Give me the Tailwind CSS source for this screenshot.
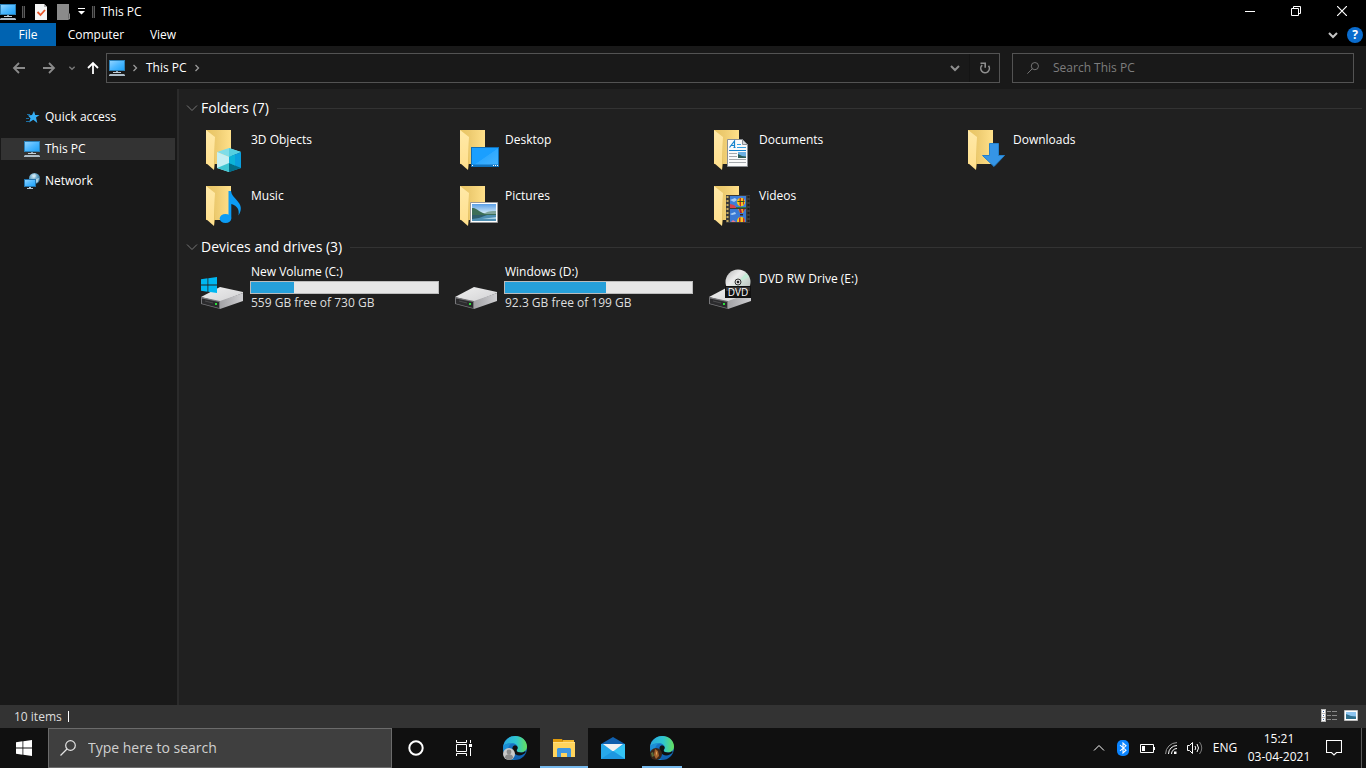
<!DOCTYPE html>
<html lang="en">
<head>
    <meta charset="UTF-8">
    <meta name="viewport" content="width=device-width, initial-scale=1.0">
    <title>This PC</title>
    <script src="https://cdn.jsdelivr.net/npm/@tailwindcss/browser@4"></script>
</head>
<body class="h-screen flex flex-col overflow-hidden bg-[#202020] text-white text-xs font-['Open_Sans','Noto_Sans',sans-serif]">

    <!-- Shared icons -->
    <svg class="absolute w-0 h-0" aria-hidden="true">
      <defs>
        <linearGradient id="g-screen" x1="0" y1="0" x2="1" y2="1">
          <stop offset="0" stop-color="#8fd3ff"/><stop offset=".5" stop-color="#4db8ff"/><stop offset="1" stop-color="#1fa2f7"/>
        </linearGradient>
        <linearGradient id="g-back" x1="0" y1="0" x2="1" y2="0">
          <stop offset="0" stop-color="#e8c462"/><stop offset=".4" stop-color="#edcb70"/><stop offset="1" stop-color="#ffe08a"/>
        </linearGradient>
        <linearGradient id="g-flap" x1="0" y1="0" x2="0" y2="1">
          <stop offset="0" stop-color="#ffe9a8"/><stop offset="1" stop-color="#ffdf8c"/>
        </linearGradient>
        <linearGradient id="g-desk" x1="0" y1="0" x2="1" y2="1">
          <stop offset="0" stop-color="#1a9fff"/><stop offset=".5" stop-color="#1a9fff"/><stop offset=".52" stop-color="#2fa9ff"/><stop offset="1" stop-color="#45b4ff"/>
        </linearGradient>
        <linearGradient id="g-sky" x1="0" y1="0" x2="0" y2="1">
          <stop offset="0" stop-color="#5b9fe6"/><stop offset=".55" stop-color="#d5ecf8"/><stop offset="1" stop-color="#8cc0dd"/>
        </linearGradient>
        <linearGradient id="g-top" x1="0" y1="0" x2="1" y2="1">
          <stop offset="0" stop-color="#efefef"/><stop offset="1" stop-color="#d2d2d4"/>
        </linearGradient>
        <linearGradient id="g-side" x1="0" y1="0" x2="1" y2="0">
          <stop offset="0" stop-color="#a2a2a5"/><stop offset="1" stop-color="#cfcfd2"/>
        </linearGradient>
        <linearGradient id="g-disc" x1="0" y1="0" x2="1" y2="1">
          <stop offset="0" stop-color="#b5b5b5"/><stop offset=".35" stop-color="#ececec"/><stop offset=".6" stop-color="#cfdcd4"/><stop offset="1" stop-color="#b0b0b0"/>
        </linearGradient>
        <linearGradient id="g-edge" x1="0" y1="0" x2="1" y2="0">
          <stop offset="0" stop-color="#2aa9e0"/><stop offset=".55" stop-color="#2fc6cf"/><stop offset="1" stop-color="#66e05a"/>
        </linearGradient>
        <linearGradient id="g-edge2" x1="0" y1="0" x2="0" y2="1">
          <stop offset="0" stop-color="#1b7fd0"/><stop offset="1" stop-color="#0f5fb0"/>
        </linearGradient>
        <radialGradient id="g-globe" cx=".4" cy=".3" r=".8">
          <stop offset="0" stop-color="#cfe9f5"/><stop offset=".5" stop-color="#5a9cc0"/><stop offset="1" stop-color="#245a80"/>
        </radialGradient>
      </defs>

      <symbol id="i-pc" viewBox="0 0 16 16">
        <path d="M0 0h16v11H0z" fill="#2c81b8"/>
        <path d="M1 1h14v9H1z" fill="url(#g-screen)"/>
        <path d="M7 11h2v1H7z" fill="#8fa4b2"/><path d="M4 12h8v1H4z" fill="#c3ced6"/>
        <path d="M1 14h14l1 1v1H0v-1z" fill="#aebdc8"/>
      </symbol>

      <symbol id="i-folder" viewBox="0 0 48 48">
        <path d="M8 4h25v34H8z" fill="url(#g-back)"/>
        <path d="M8 4l9 7-1 33-8-7z" fill="url(#g-flap)"/>
        <path d="M17 11v26l-1 7z" fill="#e2bf62"/>
      </symbol>

      <symbol id="i-drive" viewBox="0 0 48 48">
        <path d="M3 32l19-10 23 5v1L22 37z" fill="url(#g-top)"/>
        <path d="M22 36l23-8v8l-23 8z" fill="url(#g-side)"/>
        <path d="M3 32l19 4v8L3 39z" fill="#77777a"/>
        <path d="M4 33.400l17 3.500v6L4 38.400z" fill="#2b2b2d"/>
        <path d="M7 36l8 2" stroke="#4a4a4c" fill="none"/>
        <path d="M17 38h2v2h-2z" fill="#2be03b"/>
      </symbol>

      <symbol id="i-win" viewBox="0 0 16 16">
        <path d="M0 2.200L6.500 1.300V7.600H0zM7.300 1.200L16 0V7.600H7.300zM0 8.400H6.500V14.700L0 13.800zM7.300 8.400H16V16L7.300 14.800z" fill="currentColor"/>
      </symbol>

      <symbol id="i-edge" viewBox="0 0 24 24">
        <circle cx="12" cy="12" r="12" fill="url(#g-edge2)"/>
        <path d="M.2 10.200C1.200 4.300 6.200 0 12.200 0 19 0 24 4.800 24 10.500c0 3.600-2.700 5.900-6 5.900-2.800 0-4.300-1-4.300-2 0-.7 1-1.200 1-2.900 0-2.400-2.300-4.300-5.700-4.300-3.400 0-7.200 1.300-8.800 3z" fill="url(#g-edge)"/>
        <path d="M9.500 11.800c.3-1.600 1.600-2.600 3-2.400 1.300.2 2.200 1.200 2.200 2.400 0 1.200-1 1.900-1 2.700 0 1 1.500 2 4.300 2 1.600 0 3-.5 4-1.300l.8.900c-1.600 2.200-4 3.400-6.700 3.400-3.900 0-7.100-3.500-6.600-7.700z" fill="#101010"/>
        <path d="M.2 10.200c1.600-1.900 5-3 8.800-3C5.800 8.800 4.600 12 5.200 15.500 5.800 19 8.500 22.500 12 24 5.400 24-.8 18.500.2 10.200z" fill="#1c8fd6"/>
      </symbol>

      <symbol id="i-chev" viewBox="0 0 12 12">
        <path d="M2 4l4 4 4-4" fill="none" stroke="currentColor" stroke-width="2"/>
      </symbol>
      <symbol id="i-thin" viewBox="0 0 12 12">
        <path d="M1 3.500l5 5 5-5" fill="none" stroke="currentColor"/>
      </symbol>
      <symbol id="i-right" viewBox="0 0 8 8">
        <path d="M2.500 1l3 3-3 3" fill="none" stroke="currentColor" stroke-width="1.300"/>
      </symbol>
      <symbol id="i-arrow" viewBox="0 0 14 14">
        <path d="M13 7H2M7 2L2 7l5 5" fill="none" stroke="currentColor" stroke-width="1.800"/>
      </symbol>
      <symbol id="i-search" viewBox="0 0 16 16">
        <circle cx="10.500" cy="5.500" r="4.800" fill="none" stroke="currentColor" stroke-width="1.200"/>
        <path d="M7 9L.5 15.500" fill="none" stroke="currentColor" stroke-width="1.200"/>
      </symbol>
    </svg>

    <!-- Title bar -->
    <header class="shrink-0 bg-black">
      <div class="flex items-center h-[23px]">
        <svg class="w-4 h-4"><use href="#i-pc"/></svg>
        <span class="w-[3px] h-3 ml-1.5 bg-[#222] border-x border-[#5a5a5a]"></span>
        <button type="button" aria-label="Properties" class="ml-2.5">
          <svg class="w-3 h-4" viewBox="0 0 12 16"><path d="M0 0h9l3 3v13H0z" fill="#f4f4f4"/><path d="M9 0v3h3z" fill="#b5b5b5"/><path d="M2.500 8l3 3L10 6" fill="none" stroke="#e8562a" stroke-width="1.800"/></svg>
        </button>
        <button type="button" aria-label="New folder" class="ml-2.5">
          <svg class="w-[13px] h-4" viewBox="0 0 13 16"><path d="M0 0h12v9l1 1v5l-2 1H0z" fill="#8a8a8a"/><path d="M11.500 9.500v5" stroke="#6a6a6a"/></svg>
        </button>
        <button type="button" aria-label="Customize Quick Access Toolbar" class="ml-2">
          <svg class="w-[7px] h-[7px]" viewBox="0 0 7 7"><path d="M0 0h7v1H0zM0 3h7L3.500 6.500z" fill="#fff"/></svg>
        </button>
        <span class="w-[3px] h-3 ml-[7px] bg-[#222] border-x border-[#5a5a5a]"></span>
        <h1 class="ml-1.5">This PC</h1>
        <div class="flex ml-auto mr-px pb-0.5">
          <button type="button" aria-label="Minimize" class="w-[46px] h-5 flex items-center justify-center"><svg class="w-2.5 h-2.5" viewBox="0 0 10 10"><path d="M0 5h10v1H0z" fill="#fff"/></svg></button>
          <button type="button" aria-label="Restore" class="w-[46px] h-5 flex items-center justify-center"><svg class="w-2.5 h-2.5" viewBox="0 0 10 10"><path d="M.5 2.500h7v7h-7zM2.500 2.500v-2h7v7h-2" fill="none" stroke="#fff"/></svg></button>
          <button type="button" aria-label="Close" class="w-[46px] h-5 flex items-center justify-center"><svg class="w-2.5 h-2.5" viewBox="0 0 10 10"><path d="M0 0l10 10M10 0L0 10" stroke="#fff" stroke-width="1.200"/></svg></button>
        </div>
      </div>
      <nav class="flex items-center h-[23px]">
        <button type="button" class="w-14 h-full bg-[#0063b1]">File</button>
        <button type="button" class="w-20 h-full">Computer</button>
        <button type="button" class="w-[54px] h-full">View</button>
        <button type="button" aria-label="Expand the ribbon" class="ml-auto"><svg class="w-3 h-3 text-[#c4c4c4]"><use href="#i-chev"/></svg></button>
        <button type="button" aria-label="Help" class="ml-2 mr-[3px] w-4 h-4 rounded-full bg-[#0a6cce] text-xs leading-4 font-bold">?</button>
      </nav>
    </header>

    <!-- Address bar -->
    <div class="flex items-center shrink-0 h-[43px] pr-3 bg-[#191919]">
      <button type="button" aria-label="Back" class="ml-3 text-[#8a8a8a]"><svg class="w-3.5 h-3.5"><use href="#i-arrow"/></svg></button>
      <button type="button" aria-label="Forward" class="ml-4 text-[#8a8a8a]"><svg class="w-3.5 h-3.5 rotate-180"><use href="#i-arrow"/></svg></button>
      <button type="button" aria-label="Recent locations" class="ml-3 text-[#7a7a7a]"><svg class="w-2 h-2"><use href="#i-chev"/></svg></button>
      <button type="button" aria-label="Up" class="ml-2.5 text-white"><svg class="w-3.5 h-3.5 rotate-90"><use href="#i-arrow"/></svg></button>
      <div class="flex items-center grow h-[30px] ml-1.5 pl-0.5 border border-[#535353]">
        <svg class="w-4 h-4"><use href="#i-pc"/></svg>
        <svg class="w-2 h-2 ml-1.5 text-[#9a9a9a]"><use href="#i-right"/></svg>
        <a href="#" class="ml-[7px]">This PC</a>
        <svg class="w-2 h-2 ml-1.5 text-[#9a9a9a]"><use href="#i-right"/></svg>
        <button type="button" aria-label="Previous locations" class="ml-auto mr-2 text-[#8f8f8f]"><svg class="w-3 h-3"><use href="#i-chev"/></svg></button>
        <button type="button" aria-label="Refresh" class="flex items-center justify-center w-[30px] h-full border-l border-[#141414] text-[#8f8f8f]">
          <svg class="w-3 h-3" viewBox="0 0 12 12"><path d="M9.500 3.800a4.300 4.300 0 1 1-6.300-.6" fill="none" stroke="currentColor" stroke-width="1.600"/><path d="M1.500 1.300h4.700v4.400" fill="none" stroke="currentColor" stroke-width="1.600"/></svg>
        </button>
      </div>
      <label class="flex items-center w-[342px] shrink-0 h-[30px] ml-3 px-3.5 border border-[#535353] text-[#7d7d7d]">
        <svg class="w-3 h-3"><use href="#i-search"/></svg>
        <input type="text" aria-label="Search This PC" placeholder="Search This PC" class="grow ml-3.5 outline-none bg-transparent placeholder:text-[#7d7d7d]">
      </label>
    </div>

    <div class="flex grow min-h-0">
      <!-- Navigation pane -->
      <aside class="flex flex-col gap-2.5 w-[179px] shrink-0 pt-[17px] pl-px pr-0.5 bg-[#191919] border-r-2 border-[#2b2b2b]">
        <a href="#" class="flex items-center gap-[5px] h-[22px] pl-[23px]">
          <svg class="w-4 h-4" viewBox="0 0 16 16"><path d="M10 2l1.200 4L15.500 6l-3.500 2.600L13.300 14 9.300 10.800 5 13.500l1.500-4.200L4 6.600l4-.6z" fill="#35aef5"/><path d="M3 5.500h3M2 9.500h3M2 12.500h3" stroke="#1b6fa5" stroke-width="1.200"/></svg>
          Quick access
        </a>
        <a href="#" class="flex items-center gap-[5px] h-[22px] pl-[23px] bg-[#333]">
          <svg class="w-4 h-4"><use href="#i-pc"/></svg>
          This PC
        </a>
        <a href="#" class="flex items-center gap-[5px] h-[22px] pl-[23px]">
          <svg class="w-4 h-4" viewBox="0 0 16 16"><circle cx="10.500" cy="5.500" r="5.500" fill="url(#g-globe)"/><path d="M8 2l3-1 1 2-2 2zM12 6l3-1-1 4-2 1z" fill="#d5edf7" opacity=".7"/><path d="M0 6h12v8H0z" fill="#2374ad"/><path d="M1 7h10v6H1z" fill="url(#g-screen)"/><path d="M5 14h2v1H5zM3 15h6v1H3z" fill="#b7c6d0"/></svg>
          Network
        </a>
      </aside>

      <!-- Content -->
      <main class="grow pt-[9px] pr-1 overflow-hidden">
        <section>
          <h2 class="flex items-center h-5 pl-[7px] text-sm">
            <svg class="w-3 h-3 text-[#777]"><use href="#i-thin"/></svg>
            <span class="ml-[3px] mr-2">Folders (7)</span>
            <span class="grow h-px bg-[#333]"></span>
          </h2>
          <div class="grid grid-cols-[repeat(auto-fill,254px)] auto-rows-[56px] mt-1.5 pl-[19px]">
            <a href="#" class="flex gap-[5px] pt-0.5">
              <svg class="w-12 h-12" viewBox="0 0 48 48"><use href="#i-folder"/>
                <path d="M31 22l12 4-12 5-12-5z" fill="#7fdde8"/><path d="M31 22l12 4-12 5z" fill="#55cfe0"/>
                <path d="M19 26l12 5v15l-12-4z" fill="#c5eff3"/><path d="M43 26l-12 5v15l12-4z" fill="#0a9fdd"/>
                <path d="M31 37l-12 5 12 4z" fill="#3fc6d2"/><path d="M31 37l12 5-12 4z" fill="#036f88"/><path d="M31 31l6-2.500v11L31 37z" fill="#0cb4d8"/>
              </svg>
              <span class="mt-1.5">3D Objects</span>
            </a>
            <a href="#" class="flex gap-[5px] pt-0.5">
              <svg class="w-12 h-12" viewBox="0 0 48 48"><use href="#i-folder"/>
                <path d="M19 21h28v20H19z" fill="#0f6fb8"/><path d="M20 22h26v18H20z" fill="url(#g-desk)"/><path d="M20 38.500h26V40H20z" fill="#1273bd"/>
                <path d="M20 39h1v1h-1zM41 39h1v1h-1zM43 39h1v1h-1zM45 39h1v1h-1z" fill="#fff"/>
              </svg>
              <span class="mt-1.5">Desktop</span>
            </a>
            <a href="#" class="flex gap-[5px] pt-0.5">
              <svg class="w-12 h-12" viewBox="0 0 48 48"><use href="#i-folder"/>
                <path d="M21.500 13.500h15l5 5v22h-20z" fill="#fafafa" stroke="#8b8f94"/><path d="M36.500 13.500v5h5z" fill="#d5d8db" stroke="#8b8f94"/>
                <path d="M23.500 21.500l5-6.500v6.500M25 19.500h3.500M27.500 21.500h2" fill="none" stroke="#1583cc" stroke-width="1.200"/>
                <path d="M31 18.500h4M31 21.500h9" stroke="#35a0e0"/><path d="M23 24.500h17" stroke="#1583cc"/>
                <path d="M23 27.500h8M23 30.500h8M23 33.500h17M23 36.500h17" stroke="#a5a9ad"/>
                <path d="M32 26h8v6h-8z" fill="#6db0e2"/><path d="M32 28l4 2 4 .5V32h-8z" fill="#2d5c56"/>
              </svg>
              <span class="mt-1.5">Documents</span>
            </a>
            <a href="#" class="flex gap-[5px] pt-0.5">
              <svg class="w-12 h-12" viewBox="0 0 48 48"><use href="#i-folder"/>
                <path d="M29.500 17.500h9v12h6L34 40.500 22.500 29.500h7z" fill="#3595e6" stroke="#2380cb"/>
              </svg>
              <span class="mt-1.5">Downloads</span>
            </a>
            <a href="#" class="flex gap-[5px] pt-0.5">
              <svg class="w-12 h-12" viewBox="0 0 48 48"><use href="#i-folder"/>
                <ellipse cx="27.500" cy="36.500" rx="5.800" ry="4.500" fill="#0c9cf4"/>
                <path d="M30.500 36V9h2.500c.5 4 3 6 6 9.500 4 4.500 5.500 8.500 1.500 15 1-6-1-9.500-7.200-11.500V36z" fill="#0c9cf4"/>
              </svg>
              <span class="mt-1.5">Music</span>
            </a>
            <a href="#" class="flex gap-[5px] pt-0.5">
              <svg class="w-12 h-12" viewBox="0 0 48 48"><use href="#i-folder"/>
                <path d="M18.500 20.500h27v20h-27z" fill="#fff" stroke="#999"/><path d="M20 22h24v17H20z" fill="url(#g-sky)"/>
                <path d="M20 26c4 0 5 2 9 4s6 2 15 2v1H20z" fill="#3d6f58"/><path d="M33 31c4-2 7-2 11-2v3H33z" fill="#7fa49a"/>
                <path d="M20 33h24v6H20z" fill="#4f8fb2"/><path d="M20 33h15l-8 3-7 1z" fill="#2f5f6c"/><path d="M30 37l14-2v2z" fill="#a5cfe2"/>
              </svg>
              <span class="mt-1.5">Pictures</span>
            </a>
            <a href="#" class="flex gap-[5px] pt-0.5">
              <svg class="w-12 h-12" viewBox="0 0 48 48"><use href="#i-folder"/>
                <path d="M20 13h24v28H20z" fill="#3a3a3a"/>
                <path d="M21.500 14v27" stroke="#c9ad62" stroke-width="2" stroke-dasharray="2 2"/><path d="M42.500 14v27" stroke="#1d1d1d" stroke-width="2" stroke-dasharray="2 2"/>
                <path d="M24 14h16v12H24z" fill="#3f7fd8"/><path d="M24 27h16v13H24z" fill="#3a79d4"/>
                <path d="M24 18l5-2 2 2-3 2zM24 32l5-2 1 2-4 1z" fill="#a9cdf2"/><path d="M24 22l4 1 3 3h-7z" fill="#d8434b"/><path d="M30 25h10v1H30z" fill="#2f7a3a"/>
                <circle cx="35" cy="20" r="4.200" fill="#f2c81d"/><path d="M33.500 16v7l1.500 2V16zM38 17v5l-1 1v-7z" fill="#c5262c"/><path d="M31.500 19.500h7" stroke="#2d5b24"/>
                <path d="M32 27h7l-2 4h-3z" fill="#e8a51d"/><path d="M33 27h2l1 4h-2zM37 27h2l-2 3z" fill="#a81f3c"/><path d="M34 32h3v1.500h-3z" fill="#3b2414"/>
                <path d="M31 40c0-4 2-5 4-5s4 1 4 5z" fill="#f2c81d"/><path d="M33 36v4h1.500v-5zM37 35.500V40h1.500v-3z" fill="#c5262c"/><path d="M25 40l2-2 3 2z" fill="#e6788a"/>
              </svg>
              <span class="mt-1.5">Videos</span>
            </a>
          </div>
        </section>

        <section>
          <h2 class="flex items-center h-5 mt-px pl-[7px] text-sm">
            <svg class="w-3 h-3 text-[#777]"><use href="#i-thin"/></svg>
            <span class="ml-[3px] mr-2">Devices and drives (3)</span>
            <span class="grow h-px bg-[#333]"></span>
          </h2>
          <div class="grid grid-cols-[repeat(auto-fill,254px)] mt-[7px] pl-[19px]">
            <a href="#" class="flex gap-1 pr-[13px]">
              <svg class="w-12 h-12 mt-px shrink-0" viewBox="0 0 48 48"><use href="#i-drive"/><use href="#i-win" x="3" y="12" width="16" height="16" color="#00b7f1"/></svg>
              <div class="grow leading-4">
                <p class="pl-px">New Volume (C:)</p>
                <div class="h-[13px] mt-px bg-[#e6e6e6] border border-[#bcbcbc]"><div class="h-full bg-[#26a0da]" style="width:23%"></div></div>
                <p class="pl-px mt-px text-[#dedede]">559 GB free of 730 GB</p>
              </div>
            </a>
            <a href="#" class="flex gap-1 pr-[13px]">
              <svg class="w-12 h-12 mt-px shrink-0"><use href="#i-drive"/></svg>
              <div class="grow leading-4">
                <p class="pl-px">Windows (D:)</p>
                <div class="h-[13px] mt-px bg-[#e6e6e6] border border-[#bcbcbc]"><div class="h-full bg-[#26a0da]" style="width:54%"></div></div>
                <p class="pl-px mt-px text-[#dedede]">92.3 GB free of 199 GB</p>
              </div>
            </a>
            <a href="#" class="flex gap-[5px]">
              <svg class="w-12 h-12 mt-px shrink-0" viewBox="0 0 48 48"><use href="#i-drive"/>
                <circle cx="32" cy="17" r="12.500" fill="url(#g-disc)"/><path d="M32 17L40 8l3 4z" fill="#c2ecd6"/>
                <circle cx="32" cy="17" r="3" fill="#ddd" stroke="#333"/><circle cx="32" cy="17" r="1.300" fill="#222"/>
                <path d="M19 21h26v12H19z" fill="#111"/><path d="M20 22h24v4H20z" fill="#333"/>
                <text x="32" y="31" text-anchor="middle" font-size="10" fill="#fff">DVD</text>
              </svg>
              <span class="mt-[7px]">DVD RW Drive (E:)</span>
            </a>
          </div>
        </section>
      </main>
    </div>

    <!-- Status bar -->
    <footer class="flex items-center shrink-0 h-[23px] pl-3.5 pr-2 bg-[#333]">
      <span class="text-[#dedede]">10 items</span>
      <span class="w-px h-[11px] ml-1.5 bg-white"></span>
      <button type="button" aria-label="Details view" class="ml-auto mb-0.5">
        <svg class="w-4 h-[13px]" viewBox="0 0 16 13"><path d="M0 0h5v13H0z" fill="#b8b8b8"/><path d="M1 1h3v3H1zM1 5h3v3H1zM1 9h3v3H1z" fill="#fff"/><path d="M2 2h1v1H2zM2 6h1v1H2zM2 10h1v1H2z" fill="#3a5f9a"/><path d="M6 2.500h4M11 2.500h5M6 6.500h4M11 6.500h5M6 10.500h4M11 10.500h5" stroke="#8a8a8a"/></svg>
      </button>
      <button type="button" aria-label="Large icons view" class="ml-[7px] mb-0.5">
        <svg class="w-3.5 h-[11px]" viewBox="0 0 14 11"><path d="M.5.500h13v10H.5z" fill="#fff" stroke="#bdbdbd"/><path d="M2 2h10v7H2z" fill="#8cc4f0"/><path d="M2 4l5 2 5 .5V9H2z" fill="#2f6f8c"/></svg>
      </button>
    </footer>

    <!-- Taskbar -->
    <div class="flex shrink-0 h-10 bg-[#101010]">
      <button type="button" aria-label="Start" class="flex items-center justify-center w-12"><svg class="w-4 h-4 text-white"><use href="#i-win"/></svg></button>
      <label class="flex items-center w-[344px] pl-[11px] pr-3 border border-[#6b6b6b] bg-[#3f3f3f] text-[#e3e3e3]">
        <svg class="w-4 h-4"><use href="#i-search"/></svg>
        <input type="text" aria-label="Type here to search" placeholder="Type here to search" class="grow ml-3 text-sm outline-none bg-transparent placeholder:text-[#d0d0d0]">
      </label>
      <button type="button" aria-label="Cortana" class="flex items-center justify-center w-12"><svg class="w-4 h-4" viewBox="0 0 16 16"><circle cx="8" cy="8" r="6.700" fill="none" stroke="#fff" stroke-width="2"/></svg></button>
      <button type="button" aria-label="Task View" class="flex items-center justify-center w-12"><svg class="w-4 h-4" viewBox="0 0 16 16"><path d="M.5 0v2.500h10V0M.5 16v-2.500h10V16M.5 4.500h10v7H.5zM14.500 0v3M14.500 8v8" fill="none" stroke="#fff"/><path d="M13 4h3v3h-3z" fill="#fff"/></svg></button>
      <div class="flex gap-px ml-[3px]">
        <button type="button" aria-label="Microsoft Edge" class="flex items-center justify-center w-12">
          <svg class="w-6 h-6" viewBox="0 0 24 24"><use href="#i-edge"/><circle cx="6" cy="18" r="6" fill="#c9c9c9"/><circle cx="6" cy="16" r="2.400" fill="#8a8a8a"/><path d="M2 22c0-3 2-3.700 4-3.700s4 .7 4 3.700c-2.500 2.500-5.500 2.500-8 0z" fill="#8a8a8a"/></svg>
        </button>
        <button type="button" aria-label="File Explorer" class="flex items-center justify-center w-12 bg-[#333] border-b-2 border-[#76b9ed] pt-0.5">
          <svg class="w-[22px] h-[18px]" viewBox="0 0 22 18"><path d="M0 0h9l1 2v3H0z" fill="#e09b0c"/><path d="M10 1h11v3H10z" fill="#f3b92f"/><path d="M0 3h22v15H0z" fill="#ffd45c"/><path d="M0 3h22v1H0z" fill="#ffe084"/><path d="M4 10l1-1h12l1 1v8h-4v-4H8v4H4z" fill="#3f97e0"/></svg>
        </button>
        <button type="button" aria-label="Mail" class="flex items-center justify-center w-12">
          <svg class="w-6 h-[22px]" viewBox="0 0 24 22"><path d="M0 7l12-7 12 7v4H0z" fill="#1160ae"/><path d="M0 7h24v15H0z" fill="#27a8ea"/><path d="M24 7v15L12 14z" fill="#34c4f4"/><path d="M2 7h20l-10 7.500z" fill="#f3f3f3"/><path d="M0 22l12-8 12 8z" fill="#1d97e0"/></svg>
        </button>
        <button type="button" aria-label="Microsoft Edge, profile 2" class="flex items-center justify-center w-10 mx-1 border-b-2 border-[#76b9ed] pt-0.5">
          <svg class="w-6 h-6" viewBox="0 0 24 24"><use href="#i-edge"/><circle cx="6" cy="18" r="6" fill="#3a2418"/><path d="M5 13l3 2 1 5-3 3-2-4z" fill="#a5622c"/><path d="M6 15l1 2-1 3z" fill="#e6b36a"/><path d="M1 17l2-1 1 4-2 1z" fill="#5a6b3a"/></svg>
        </button>
      </div>

      <div class="flex items-center ml-auto">
        <button type="button" aria-label="Show hidden icons" class="flex justify-center w-6"><svg class="w-3 h-3 rotate-180"><use href="#i-thin"/></svg></button>
        <button type="button" aria-label="Bluetooth" class="flex justify-center w-6"><svg class="w-3 h-4" viewBox="0 0 12 16"><rect width="12" height="16" rx="5" fill="#0a84ff"/><path d="M3 5.200l6 5-3 2.800V3l3 2.800-6 5" fill="none" stroke="#fff" stroke-width="1.100"/></svg></button>
        <button type="button" aria-label="Battery" class="flex justify-center w-6"><svg class="w-[15px] h-[9px]" viewBox="0 0 15 9"><path d="M.5.500h13v8H.5z" fill="none" stroke="#fff"/><path d="M14 3h1v3h-1zM2 2h3v5H2z" fill="#fff"/></svg></button>
        <button type="button" aria-label="Network" class="flex justify-center w-6"><svg class="w-3 h-3" viewBox="0 0 12 12"><path d="M.6 12A11.400 11.400 0 0 1 12 .6" fill="none" stroke="#9a9a9a"/><path d="M3.500 12A8.500 8.500 0 0 1 12 3.500M6.500 12A5.500 5.500 0 0 1 12 6.500" fill="none" stroke="#fff"/><path d="M9 9.500h2.500V12H9z" fill="#fff"/></svg></button>
        <button type="button" aria-label="Volume" class="flex justify-center w-6"><svg class="w-4 h-3.5" viewBox="0 0 16 14"><path d="M.5 4.500h2l3-3v11l-3-3h-2z" fill="none" stroke="#fff"/><path d="M8 5q1.500 2 0 4M10 3q3 4 0 8" fill="none" stroke="#fff"/><path d="M12.500 1q4.500 6 0 12" fill="none" stroke="#7a7a7a"/></svg></button>
        <button type="button" class="w-9 text-center">ENG</button>
        <button type="button" class="w-[72px] text-center leading-[18px]">15:21<br>03-04-2021</button>
        <button type="button" aria-label="Notifications" class="flex justify-center w-[38px]"><svg class="w-4 h-4" viewBox="0 0 16 16"><path d="M.5.500h15v12h-5L8 15l-2.500-2.500h-5z" fill="none" stroke="#fff" stroke-width="1.100"/></svg></button>
        <button type="button" aria-label="Show desktop" class="self-stretch w-[5px] ml-2 border-l border-[#5a5a5a]"></button>
      </div>
    </div>

</body>
</html>
